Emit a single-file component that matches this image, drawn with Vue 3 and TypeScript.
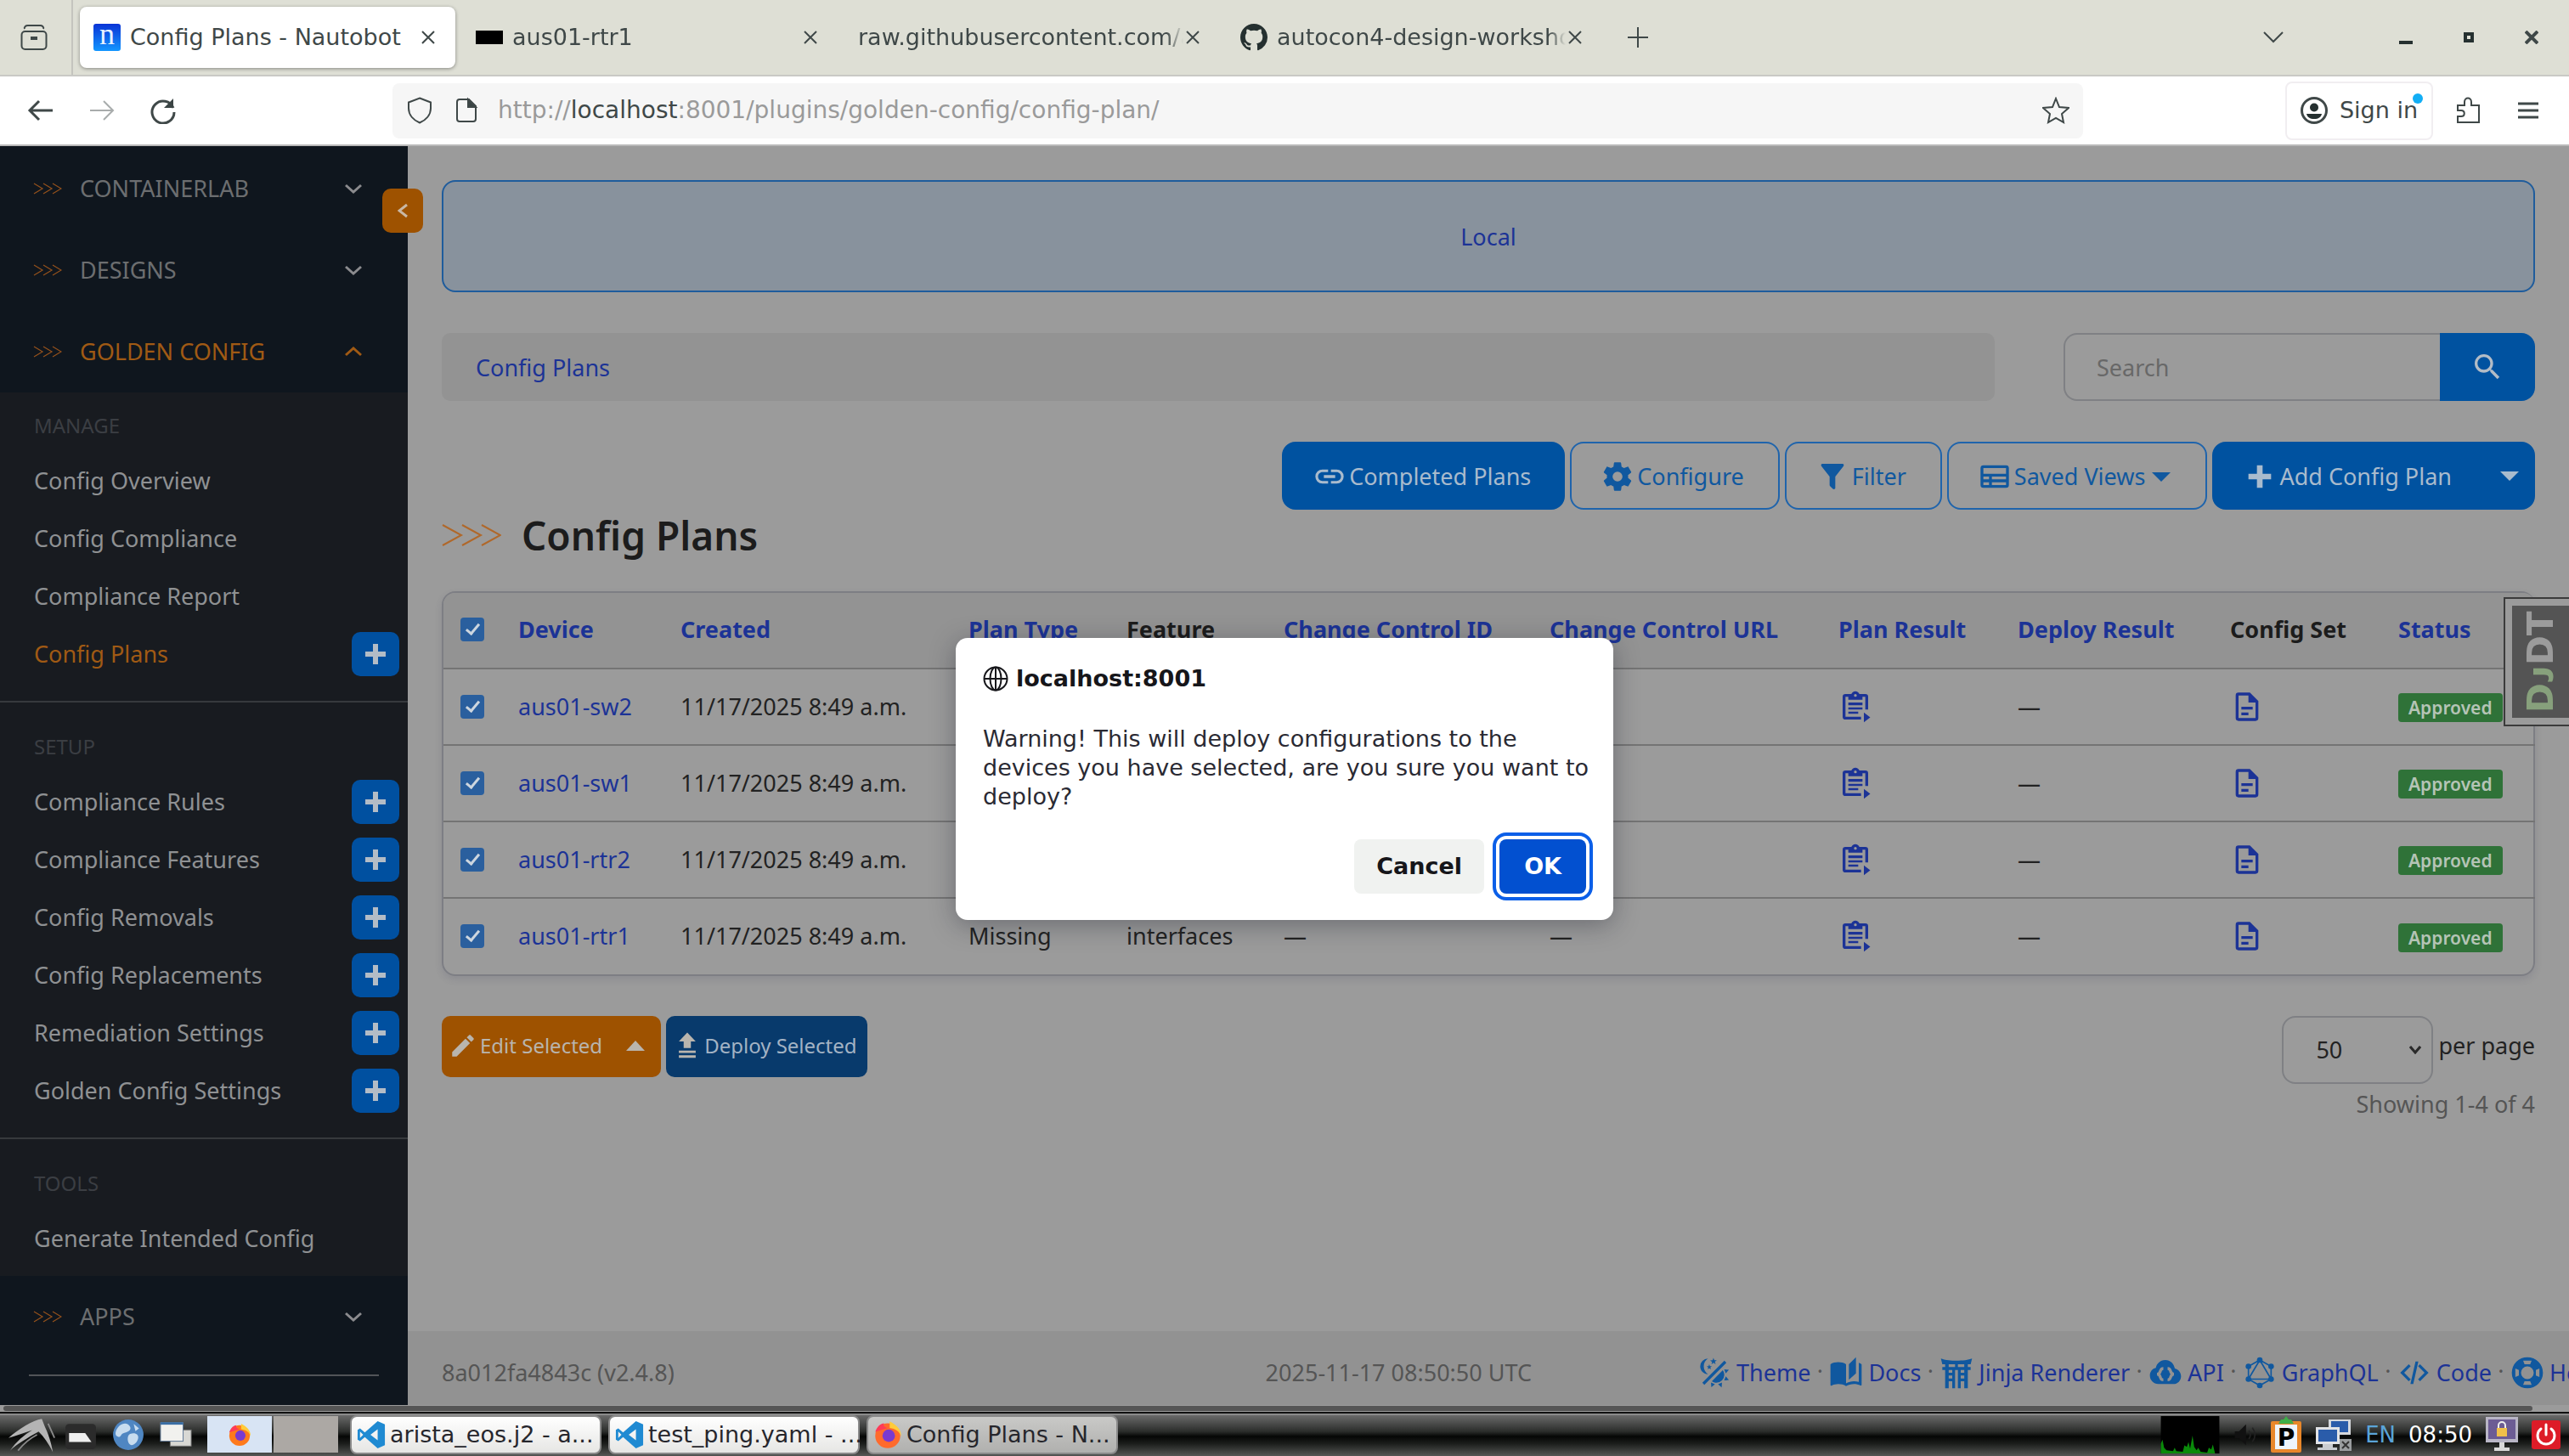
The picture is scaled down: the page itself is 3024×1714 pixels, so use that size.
<script setup lang="ts">
import { ref } from 'vue'

interface Column { label: string; width: number; link: boolean }
interface Plan { device: string; created: string; type?: string; feature?: string; control?: string }
interface MenuItem { label: string; add: boolean; active?: boolean }
interface MenuSection { title: string; items: MenuItem[] }

const icons: Record<string, string> = {
  plus: 'M20 14H14V20H10V14H4V10H10V4H14V10H20V14Z',
  link: 'M3.9,12C3.9,10.29 5.29,8.9 7,8.9H11V7H7A5,5 0 0,0 2,12A5,5 0 0,0 7,17H11V15.1H7C5.29,15.1 3.9,13.71 3.9,12M8,13H16V11H8V13M17,7H13V8.9H17C18.71,8.9 20.1,10.29 20.1,12C20.1,13.71 18.71,15.1 17,15.1H13V17H17A5,5 0 0,0 22,12A5,5 0 0,0 17,7Z',
  cog: 'M12,15.5A3.5,3.5 0 0,1 8.5,12A3.5,3.5 0 0,1 12,8.5A3.5,3.5 0 0,1 15.5,12A3.5,3.5 0 0,1 12,15.5M19.43,12.97C19.47,12.65 19.5,12.33 19.5,12C19.5,11.67 19.47,11.34 19.43,11L21.54,9.37C21.73,9.22 21.78,8.95 21.66,8.73L19.66,5.27C19.54,5.05 19.27,4.96 19.05,5.05L16.56,6.05C16.04,5.66 15.5,5.32 14.87,5.07L14.5,2.42C14.46,2.18 14.25,2 14,2H10C9.75,2 9.54,2.18 9.5,2.42L9.13,5.07C8.5,5.32 7.96,5.66 7.44,6.05L4.95,5.05C4.73,4.96 4.46,5.05 4.34,5.27L2.34,8.73C2.21,8.95 2.27,9.22 2.46,9.37L4.57,11C4.53,11.34 4.5,11.67 4.5,12C4.5,12.33 4.53,12.65 4.57,12.97L2.46,14.63C2.27,14.78 2.21,15.05 2.34,15.27L4.34,18.73C4.46,18.95 4.73,19.03 4.95,18.95L7.44,17.94C7.96,18.34 8.5,18.68 9.13,18.93L9.5,21.58C9.54,21.82 9.75,22 10,22H14C14.25,22 14.46,21.82 14.5,21.58L14.87,18.93C15.5,18.67 16.04,18.34 16.56,17.94L19.05,18.95C19.27,19.03 19.54,18.95 19.66,18.73L21.66,15.27C21.78,15.05 21.73,14.78 21.54,14.63L19.43,12.97Z',
  filter: 'M14,12V19.88C14.04,20.18 13.94,20.5 13.71,20.71C13.32,21.1 12.69,21.1 12.3,20.71L10.29,18.7C10.06,18.47 9.96,18.16 10,17.87V12H9.97L4.21,4.62C3.87,4.19 3.95,3.56 4.38,3.22C4.57,3.08 4.78,3 5,3H19C19.22,3 19.43,3.08 19.62,3.22C20.05,3.56 20.13,4.19 19.79,4.62L14.03,12H14Z',
  views: 'M4,4H20A2,2 0 0,1 22,6V18A2,2 0 0,1 20,20H4A2,2 0 0,1 2,18V6A2,2 0 0,1 4,4M4,6V10H20V6H4M4,12V14H8V12H4M10,12V14H20V12H10M4,16V18H8V16H4M10,16V18H20V16H10Z',
  down: 'M1,7H23L12,18Z',
  up: 'M1,18H23L12,6Z',
  search: 'M9.5,3A6.5,6.5 0 0,1 16,9.5C16,11.11 15.41,12.59 14.44,13.73L14.71,14H15.5L20.5,19L19,20.5L14,15.5V14.71L13.73,14.44C12.59,15.41 11.11,16 9.5,16A6.5,6.5 0 0,1 3,9.5A6.5,6.5 0 0,1 9.5,3M9.5,5C7,5 5,7 5,9.5C5,12 7,14 9.5,14C12,14 14,12 14,9.5C14,7 12,5 9.5,5Z',
  pencil: 'M20.71,7.04C21.1,6.65 21.1,6 20.71,5.63L18.37,3.29C18,2.9 17.35,2.9 16.96,3.29L15.12,5.12L18.87,8.87M3,17.25V21H6.75L17.81,9.93L14.06,6.18L3,17.25Z',
  upload: 'M12,1L19,8.5H15V14H9V8.5H5L12,1M5,16H19V18H5V16M5,20H19V22H5V20Z',
  file: 'M6,2A2,2 0 0,0 4,4V20A2,2 0 0,0 6,22H18A2,2 0 0,0 20,20V8L14,2H6M6,4H13V9H18V20H6V4M8,12V14H16V12H8M8,16V18H13V16H8Z',
  clipboard: 'M19,3H14.82C14.4,1.84 13.3,1 12,1C10.7,1 9.6,1.84 9.18,3H5A2,2 0 0,0 3,5V19A2,2 0 0,0 5,21H16V19H5V5H7V7H17V5H19V14H21V5A2,2 0 0,0 19,3M12,3A1,1 0 0,1 13,4A1,1 0 0,1 12,5A1,1 0 0,1 11,4A1,1 0 0,1 12,3M7,9H17V11H7V9M7,12.5H17V14H7V12.5M7,15.5H14V17H7V15.5M18,16L22.5,19.5L18,23V16Z',
  theme: 'M7.5,2C5.71,3.15 4.5,5.18 4.5,7.5C4.5,9.82 5.71,11.85 7.53,13C4.46,13 2,10.54 2,7.5A5.5,5.5 0 0,1 7.5,2M19.07,3.5L20.5,4.93L4.93,20.5L3.5,19.07L19.07,3.5M12.89,5.93L11.41,5L9.97,6L10.39,4.3L9,3.24L10.75,3.12L11.33,1.47L12,3.1L13.73,3.13L12.38,4.26L12.89,5.93M9.59,9.54L8.43,8.81L7.31,9.59L7.65,8.27L6.56,7.44L7.92,7.35L8.37,6.06L8.88,7.33L10.24,7.36L9.19,8.23L9.59,9.54M19,13.5A5.5,5.5 0 0,1 13.5,19C12.28,19 11.15,18.6 10.24,17.93L17.93,10.24C18.6,11.15 19,12.28 19,13.5M14.6,20.08L17.37,18.93L17.13,22.28L14.6,20.08M18.93,17.38L20.08,14.61L22.28,17.15L18.93,17.38M20.08,12.42L18.94,9.64L22.28,9.88L20.08,12.42M9.63,18.93L12.4,20.08L9.87,22.27L9.63,18.93Z',
  docs: 'M19,1L14,6V17L19,12.5V1M21,5V18.5C19.9,18.15 18.7,18 17.5,18C15.8,18 13.35,18.65 12,19.5V6C10.55,4.9 8.45,4.5 6.5,4.5C4.55,4.5 2.45,4.9 1,6V20.65C1,20.9 1.25,21.15 1.5,21.15C1.6,21.15 1.65,21.1 1.75,21.1C3.1,20.45 5.05,20 6.5,20C8.45,20 10.55,20.4 12,21.5C13.35,20.65 15.8,20 17.5,20C19.15,20 20.85,20.3 22.25,21.05C22.35,21.1 22.4,21.1 22.5,21.1C22.75,21.1 23,20.85 23,20.6V6C22.4,5.55 21.75,5.25 21,5Z',
  jinja: 'M1,2C6,4 18,4 23,2L22,6H20V8H22V10H20V23H17.5V18H15V23H13V10H11V23H9V18H6.5V23H4V10H2V8H4V6H2L1,2M6.5,6V8H11V6H6.5M13,6V8H17.5V6H13M6.5,10V12H9V10H6.5M6.5,14V16H9V14H6.5M15,10V12H17.5V10H15M15,14V16H17.5V14H15Z',
  api: 'M12,3C8.5,3 5.7,5.4 5.2,8.6C2.8,9.1 1,11.3 1,14C1,17.3 3.6,20 7,20H17.5C20.6,20 23,17.5 23,14.5C23,11.7 21.1,9.5 18.6,9C18,5.600 15.300,3 12,3M10.500,8V10C9,10 9.500,12.500 8.300,13C9.500,13.500 9,16 10.500,16V18C7,18 8,14.200 6,14V12C8,11.800 7,8 10.500,8M13.500,8C17,8 16,11.800 18,12V14C16,14.200 17,18 13.500,18V16C15,16 14.500,13.500 15.700,13C14.500,12.500 15,10 13.500,10Z',
  code: 'M14.6,16.6L19.2,12L14.6,7.4L16,6L22,12L16,18L14.6,16.6M9.4,16.6L4.8,12L9.4,7.4L8,6L2,12L8,18L9.4,16.6M12.8,4H14.8L11.2,20H9.2L12.800,4Z',
  help: 'M12,1A11,11 0 1,0 12,23A11,11 0 1,0 12,1M12,7.500A4.500,4.500 0 1,1 12,16.500A4.500,4.500 0 1,1 12,7.500M9,3.500H15L14,6H10L9,3.500M9,20.500L10,18H14L15,20.500H9M3.500,9L6,10V14L3.500,15V9M20.500,9V15L18,14V10L20.500,9Z',
}

const github = 'M8 0C3.58 0 0 3.58 0 8c0 3.54 2.29 6.53 5.47 7.59.4.07.55-.17.55-.38 0-.19-.01-.82-.01-1.49-2.01.37-2.53-.49-2.69-.94-.09-.23-.48-.94-.82-1.13-.28-.15-.68-.52-.01-.53.63-.01 1.08.58 1.23.82.72 1.21 1.87.87 2.33.66.07-.52.28-.87.51-1.07-1.78-.2-3.64-.89-3.64-3.95 0-.87.31-1.59.82-2.15-.08-.2-.36-1.02.08-2.12 0 0 .67-.21 2.2.82.64-.18 1.32-.27 2-.27s1.36.09 2 .27c1.53-1.04 2.2-.82 2.2-.82.44 1.1.16 1.92.08 2.12.51.56.82 1.27.82 2.15 0 3.07-1.87 3.75-3.65 3.95.29.25.54.73.54 1.48 0 1.07-.01 1.93-.01 2.2 0 .21.15.46.55.38A8.01 8.01 0 0 0 16 8c0-4.42-3.58-8-8-8'

const tabs = [
  { title: 'Config Plans - Nautobot', icon: 'nautobot', active: true },
  { title: 'aus01-rtr1', icon: 'terminal', active: false },
  { title: 'raw.githubusercontent.com/a', icon: '', active: false },
  { title: 'autocon4-design-worksho', icon: 'github', active: false },
]

const groups = ['CONTAINERLAB', 'DESIGNS']

const sections: MenuSection[] = [
  {
    title: 'MANAGE',
    items: [
      { label: 'Config Overview', add: false },
      { label: 'Config Compliance', add: false },
      { label: 'Compliance Report', add: false },
      { label: 'Config Plans', add: true, active: true },
    ],
  },
  {
    title: 'SETUP',
    items: [
      { label: 'Compliance Rules', add: true },
      { label: 'Compliance Features', add: true },
      { label: 'Config Removals', add: true },
      { label: 'Config Replacements', add: true },
      { label: 'Remediation Settings', add: true },
      { label: 'Golden Config Settings', add: true },
    ],
  },
  { title: 'TOOLS', items: [{ label: 'Generate Intended Config', add: false }] },
]

const columns: Column[] = [
  { label: 'Device', width: 191, link: true },
  { label: 'Created', width: 339, link: true },
  { label: 'Plan Type', width: 186, link: true },
  { label: 'Feature', width: 185, link: false },
  { label: 'Change Control ID', width: 313, link: true },
  { label: 'Change Control URL', width: 340, link: true },
  { label: 'Plan Result', width: 211, link: true },
  { label: 'Deploy Result', width: 250, link: true },
  { label: 'Config Set', width: 198, link: false },
  { label: 'Status', width: 181, link: true },
]

const created = '11/17/2025 8:49 a.m.'
const plans: Plan[] = [
  { device: 'aus01-sw2', created },
  { device: 'aus01-sw1', created },
  { device: 'aus01-rtr2', created },
  { device: 'aus01-rtr1', created, type: 'Missing', feature: 'interfaces', control: '—' },
]

const footerLinks = [
  { label: 'Theme', icon: 'theme' },
  { label: 'Docs', icon: 'docs' },
  { label: 'Jinja Renderer', icon: 'jinja' },
  { label: 'API', icon: 'api' },
  { label: 'GraphQL', icon: 'graphql' },
  { label: 'Code', icon: 'code' },
  { label: 'Help', icon: 'help' },
]

const allSelected = ref(true)
const selected = ref<string[]>(plans.map((p) => p.device))
const perPage = ref('50')
const query = ref('')
</script>

<template>
  <div class="desktop">
    <header class="tabbar">
      <button class="view" aria-label="Firefox View">
        <svg class="i32 line" viewBox="0 0 32 32"><path d="M5 6a4 3 0 0 1 4-4h14a4 3 0 0 1 4 4" /><rect x="1.500" y="9" width="29" height="21" rx="4" /><path d="M12 17h8" stroke-width="4" /></svg>
      </button>
      <div v-for="tab in tabs" :key="tab.title" class="tab" :class="{ active: tab.active }">
        <span v-if="tab.icon === 'nautobot'" class="favicon">n</span>
        <span v-else-if="tab.icon === 'terminal'" class="term"></span>
        <svg v-else-if="tab.icon === 'github'" class="i32 dark" viewBox="0 0 16 16"><path :d="github" /></svg>
        <span class="tab-title">{{ tab.title }}</span>
        <button class="close" aria-label="Close tab">
          <svg class="i16 line" viewBox="0 0 16 16"><path d="M1 1l14 14M15 1L1 15" /></svg>
        </button>
      </div>
      <button class="newtab" aria-label="New tab"><svg class="i24 line" viewBox="0 0 24 24"><path d="M12 0v24M0 12h24" /></svg></button>
      <div class="winctl">
        <button aria-label="List tabs" class="listall"><svg class="i24 line" viewBox="0 0 24 24"><path d="M1 6l11 11L23 6" /></svg></button>
        <button aria-label="Minimize"><svg class="i16 dark" viewBox="0 0 16 16"><path d="M0 12h16v4H0z" /></svg></button>
        <button aria-label="Maximize"><svg class="i16 dark" viewBox="0 0 16 16"><path fill-rule="evenodd" d="M2 2h12v12H2zM6 6v4h4V6z" /></svg></button>
        <button aria-label="Close"><svg class="i16 line" viewBox="0 0 16 16"><path d="M1 1l14 14M15 1L1 15" stroke-width="4" /></svg></button>
      </div>
    </header>

    <div class="toolbar">
      <div class="nav">
        <button aria-label="Back"><svg class="i32 line" viewBox="0 0 32 32"><path d="M30 16H3M14 5L3 16l11 11" stroke-width="3" /></svg></button>
        <button aria-label="Forward" class="faint"><svg class="i32 line" viewBox="0 0 32 32"><path d="M2 16h27M18 5l11 11-11 11" /></svg></button>
        <button aria-label="Reload"><svg class="i32 line" viewBox="0 0 32 32"><path d="M28 13A13 13 0 1 0 29 18" stroke-width="3" /><path d="M28 2v11H17z" fill="#3a4444" stroke="none" /></svg></button>
      </div>
      <div class="urlbar">
        <svg class="i32 line" viewBox="0 0 32 32"><path d="M16 1.500l13 5v7c0 8-6 14-13 17-7-3-13-9-13-17v-7z" /></svg>
        <svg class="i32 line" viewBox="0 0 32 32"><path d="M7 3h11l8 8v15a3 3 0 0 1-3 3H7a3 3 0 0 1-3-3V6a3 3 0 0 1 3-3z" /><path d="M17 3l9 9h-9z" fill="#3a4444" /></svg>
        <span class="url">http://<b>localhost</b>:8001/plugins/golden-config/config-plan/</span>
        <svg class="i32 line" viewBox="0 0 32 32"><path d="M16 2l4 10 11 1-8 7 2 10-9-5-9 5 2-10-8-7 11-1z" /></svg>
      </div>
      <div class="actions">
        <button class="signin">
          <svg class="i32 line" viewBox="0 0 32 32"><circle cx="16" cy="16" r="14.500" stroke-width="3" /><circle cx="16" cy="12.500" r="5" fill="#253030" stroke="none" /><path d="M7 20h18c-1 4-4 6-9 6s-8-2-9-6z" fill="#253030" stroke="none" /></svg>
          Sign in<i class="dot"></i>
        </button>
        <button aria-label="Extensions"><svg class="i32 line" viewBox="0 0 32 32"><path d="M3 10h8V6c0-6 8-6 8 0v4h9v20H3v-7h4c5 0 5-7 0-7H3z" /></svg></button>
        <button aria-label="Menu"><svg class="i24 line" viewBox="0 0 24 24"><path d="M0 4h24M0 12h24M0 20h24" stroke-width="3" /></svg></button>
      </div>
    </div>

    <div class="viewport">
      <nav class="sidebar">
        <button v-for="g in groups" :key="g" class="group">
          <svg class="arrows" viewBox="0 0 34 14"><path d="M1 1l10 6-10 6M12 1l10 6-10 6M23 1l10 6-10 6" /></svg>
          <span>{{ g }}</span>
          <svg class="chev" viewBox="0 0 20 12"><path d="M1 2l9 8 9-8" /></svg>
        </button>
        <button class="group open">
          <svg class="arrows" viewBox="0 0 34 14"><path d="M1 1l10 6-10 6M12 1l10 6-10 6M23 1l10 6-10 6" /></svg>
          <span>GOLDEN CONFIG</span>
          <svg class="chev" viewBox="0 0 20 12"><path d="M1 10l9-8 9 8" /></svg>
        </button>
        <div class="panel">
          <section v-for="s in sections" :key="s.title">
            <h3>{{ s.title }}</h3>
            <div v-for="item in s.items" :key="item.label" class="item">
              <a href="#" :class="{ current: item.active }">{{ item.label }}</a>
              <button v-if="item.add" :aria-label="'Add ' + item.label"><svg viewBox="0 0 24 24"><path :d="icons.plus" /></svg></button>
            </div>
          </section>
        </div>
        <button class="group">
          <svg class="arrows" viewBox="0 0 34 14"><path d="M1 1l10 6-10 6M12 1l10 6-10 6M23 1l10 6-10 6" /></svg>
          <span>APPS</span>
          <svg class="chev" viewBox="0 0 20 12"><path d="M1 2l9 8 9-8" /></svg>
        </button>
        <hr />
        <button class="collapse" aria-label="Collapse sidebar"><svg viewBox="0 0 12 18"><path d="M11 2L2 9l9 7" /></svg></button>
      </nav>

      <div class="page">
        <main>
          <div class="banner">Local</div>
          <div class="crumbs-row">
            <div class="crumbs"><a href="#">Config Plans</a></div>
            <form class="search" @submit.prevent>
              <input v-model="query" type="text" placeholder="Search" aria-label="Search" />
              <button aria-label="Search"><svg class="mdi" viewBox="0 0 24 24"><path :d="icons.search" /></svg></button>
            </form>
          </div>
          <div class="buttons">
            <button class="btn solid"><svg class="mdi" viewBox="0 0 24 24"><path :d="icons.link" /></svg>Completed Plans</button>
            <button class="btn"><svg class="mdi" viewBox="0 0 24 24"><path :d="icons.cog" /></svg>Configure</button>
            <button class="btn"><svg class="mdi" viewBox="0 0 24 24"><path :d="icons.filter" /></svg>Filter</button>
            <button class="btn"><svg class="mdi" viewBox="0 0 24 24"><path :d="icons.views" /></svg>Saved Views<svg class="caret" viewBox="0 0 24 24"><path :d="icons.down" /></svg></button>
            <div class="split">
              <button class="btn solid"><svg class="mdi" viewBox="0 0 24 24"><path :d="icons.plus" /></svg>Add Config Plan</button>
              <button class="btn solid more" aria-label="More"><svg class="caret" viewBox="0 0 24 24"><path :d="icons.down" /></svg></button>
            </div>
          </div>
          <h1>
            <svg viewBox="0 0 70 28"><path d="M1 2l22 12L1 26M24 2l22 12-22 12M47 2l22 12-22 12" /></svg>
            Config Plans
          </h1>

          <div class="table-card">
            <table>
              <colgroup>
                <col class="check-col" />
                <col v-for="c in columns" :key="c.label" :style="{ width: c.width + 'px' }" />
              </colgroup>
              <thead>
                <tr>
                  <th><input v-model="allSelected" type="checkbox" aria-label="Select all" /></th>
                  <th v-for="c in columns" :key="c.label"><a v-if="c.link" href="#">{{ c.label }}</a><template v-else>{{ c.label }}</template></th>
                </tr>
              </thead>
              <tbody>
                <tr v-for="p in plans" :key="p.device">
                  <td><input v-model="selected" type="checkbox" :value="p.device" :aria-label="'Select ' + p.device" /></td>
                  <td><a href="#">{{ p.device }}</a></td>
                  <td>{{ p.created }}</td>
                  <td>{{ p.type }}</td>
                  <td>{{ p.feature }}</td>
                  <td>{{ p.control }}</td>
                  <td>{{ p.control }}</td>
                  <td><a href="#" aria-label="Plan result"><svg class="cell-icon" viewBox="0 0 24 24"><path :d="icons.clipboard" /></svg></a></td>
                  <td>—</td>
                  <td><a href="#" aria-label="Config set"><svg class="cell-icon" viewBox="0 0 24 24"><path :d="icons.file" /></svg></a></td>
                  <td><span class="badge">Approved</span></td>
                </tr>
              </tbody>
            </table>
            <div class="djdt"><span><em>Dᴊ</em>DT</span></div>
          </div>

          <div class="below">
            <div class="bulk">
              <button class="edit"><svg viewBox="0 0 24 24"><path :d="icons.pencil" /></svg>Edit Selected<svg class="caret" viewBox="0 0 24 24"><path :d="icons.up" /></svg></button>
              <button class="deploy"><svg viewBox="0 0 24 24"><path :d="icons.upload" /></svg>Deploy Selected</button>
            </div>
            <div class="paging">
              <label><span class="select"><select v-model="perPage"><option>50</option><option>100</option></select><svg viewBox="0 0 14 10"><path d="M1 1l6 7 6-7" /></svg></span><span class="unit">per page</span></label>
              <p>Showing 1-4 of 4</p>
            </div>
          </div>
        </main>
        <footer>
          <span>8a012fa4843c (v2.4.8)</span>
          <span class="stamp">2025-11-17 08:50:50 UTC</span>
          <ul>
            <li v-for="l in footerLinks" :key="l.label">
              <a href="#">
                <svg v-if="l.icon === 'graphql'" class="gql" viewBox="0 0 24 24"><path d="M12 3l8 4.500v9L12 21l-8-4.500v-9zM12 3l8 13.500H4z" /><circle cx="12" cy="3" r="2" /><circle cx="12" cy="21" r="2" /><circle cx="4" cy="7.500" r="2" /><circle cx="20" cy="7.500" r="2" /><circle cx="4" cy="16.500" r="2" /><circle cx="20" cy="16.500" r="2" /></svg>
                <svg v-else viewBox="0 0 24 24"><path :d="icons[l.icon]" fill-rule="evenodd" /></svg>
                {{ l.label }}
              </a>
            </li>
          </ul>
        </footer>
      </div>

      <div class="hscroll"></div>

      <div class="overlay">
        <div class="dialog" role="alertdialog" aria-labelledby="dlg-title">
          <h2 id="dlg-title">
            <svg viewBox="0 0 30 30"><circle cx="15" cy="15" r="13.500" /><ellipse cx="15" cy="15" rx="6.500" ry="13.500" /><path d="M1.500 15h27M15 1.500v27" /></svg>
            localhost:8001
          </h2>
          <p>Warning! This will deploy configurations to the devices you have selected, are you sure you want to deploy?</p>
          <div class="dialog-actions">
            <button>Cancel</button>
            <button class="ok">OK</button>
          </div>
        </div>
      </div>
    </div>

    <div class="taskbar">
      <button class="bird" aria-label="Menu">
        <svg viewBox="0 0 60 44"><path d="M0 26C14 14 30 4 42 2l4 10c4 8 8 20 10 32C50 32 44 24 38 18 24 26 10 34 2 42 10 30 20 22 30 16 18 20 8 24 0 26z" fill="#b4b4b4" /><path d="M12 42c8-10 16-16 24-20M50 8l8 18" stroke="#8a8a8a" stroke-width="2" fill="none" /></svg>
      </button>
      <button class="launch" aria-label="Files"><svg viewBox="0 0 36 36"><rect x="1" y="6" width="34" height="28" rx="4" fill="#2b2b2b" /><path d="M5 16h18l7 10H5z" fill="#eee" /></svg></button>
      <button class="launch" aria-label="Web"><svg viewBox="0 0 36 36"><circle cx="18" cy="18" r="17" fill="#4f86c2" /><path d="M8 8c5-4 10-3 12 1s-3 6-7 7-3 6-7 4-2-8 2-12zM20 17c5-2 10 0 9 5s-6 9-9 7-4-10 0-12zM24 6l6 5-4 3z" fill="#c7dcef" /></svg></button>
      <button class="launch" aria-label="Desktop"><svg viewBox="0 0 40 36"><rect x="13" y="12" width="26" height="20" fill="#d8d8d4" stroke="#777" /><rect x="1" y="3" width="28" height="23" fill="#f1f1ee" stroke="#5d7694" /><path d="M1 4h28" stroke="#3a6ea5" stroke-width="3" /></svg></button>
      <button class="desk on" aria-label="Desktop 1"><svg viewBox="0 0 30 30"><circle cx="15" cy="16" r="13" fill="#ff7a1c" /><path d="M17 1c8 4 12 9 12 16-2-6-6-8-12-9z" fill="#ffcb3a" /><path d="M2 12C4 6 8 3 11 3c-1 3 1 4 4 5z" fill="#ff3b57" /><circle cx="16" cy="16" r="6.500" fill="#7a3ad0" /></svg></button>
      <button class="desk" aria-label="Desktop 2"></button>
      <div class="windows">
        <button><svg viewBox="0 0 36 36"><path d="M26 1l9 4v26l-9 4L10 21l-6 5-3-2V12l3-2 6 5zM26 11l-9 7 9 7zM4 14v8l4-4z" fill="#1f8ad2" fill-rule="evenodd" /></svg>arista_eos.j2 - a...</button>
        <button><svg viewBox="0 0 36 36"><path d="M26 1l9 4v26l-9 4L10 21l-6 5-3-2V12l3-2 6 5zM26 11l-9 7 9 7zM4 14v8l4-4z" fill="#1f8ad2" fill-rule="evenodd" /></svg>test_ping.yaml - ...</button>
        <button class="focused"><svg viewBox="0 0 30 30"><circle cx="15" cy="16" r="13" fill="#ff6a2c" /><path d="M17 1c8 4 12 9 12 16-2-6-6-8-12-9z" fill="#ffcb3a" /><path d="M2 12C4 6 8 3 11 3c-1 3 1 4 4 5z" fill="#ff3b57" /><circle cx="16" cy="16" r="6.500" fill="#7a3ad0" /></svg>Config Plans - N...</button>
      </div>
      <div class="tray">
        <svg class="cpu" viewBox="0 0 72 46"><rect width="72" height="46" fill="#000" /><path d="M0 46V34l2-5 2 10 3 3 8 1 2-4 2 4 8 1 2-8 3 2 2-6 2 8 3-16 2 14 3 4 2-3 3 5 8 1 2-6 3 2 2-6 3 12v3z" fill="#0a8a0a" /></svg>
        <svg class="vol" viewBox="0 0 34 36"><path d="M2 13h6l10-10v30L8 23H2z" fill="#111" /><path d="M22 12c3 4 3 8 0 12M27 8c5 6 5 14 0 20" stroke="#222" stroke-width="2" fill="none" /></svg>
        <svg class="clip" viewBox="0 0 38 44"><rect x="1" y="6" width="36" height="37" rx="2" fill="#e8872a" /><rect x="6" y="10" width="26" height="29" fill="#eef3fa" /><path d="M10 9h18l-3-5H22L19 0l-3 4h-3z" fill="#3fae49" /><text x="19" y="35" text-anchor="middle" font-size="28" font-weight="700" font-family="DejaVu Sans, sans-serif">P</text></svg>
        <svg class="net" viewBox="0 0 44 40"><rect x="16" y="2" width="26" height="18" fill="#d5d8dc" /><rect x="19" y="4" width="20" height="13" fill="#2a5caa" /><rect x="1" y="11" width="28" height="20" fill="#e1e3e6" /><rect x="4" y="14" width="22" height="14" fill="#2a5caa" /><path d="M9 31h12v4h5v3H3v-3h6z" fill="#c9ccd0" /><rect x="29" y="25" width="14" height="14" fill="#9a9d9f" /><path d="M32 28l8 8M40 28l-8 8" stroke="#333" stroke-width="2" /></svg>
        <span class="lang">EN</span>
        <time>08:50</time>
        <svg class="lock" viewBox="0 0 40 44"><rect x="1" y="1" width="38" height="30" fill="#b9b6c6" /><rect x="4" y="4" width="32" height="23" fill="#6c5c94" /><rect x="14" y="14" width="12" height="10" fill="#f0c04a" /><path d="M16 14v-3a4 4 0 0 1 8 0v3" stroke="#eee" stroke-width="2" fill="none" /><path d="M17 31h6v6h6v4H11v-4h6z" fill="#d9d9d9" /></svg>
        <svg class="power" viewBox="0 0 34 34"><rect width="34" height="34" rx="3" fill="#dd1c28" /><path d="M11 10a10 10 0 1 0 12 0M17 5v12" stroke="#fff" stroke-width="3" fill="none" stroke-linecap="round" /></svg>
      </div>
    </div>
  </div>
</template>

<style>
html, body { margin: 0; background: #000; }
</style>

<style scoped>
* { box-sizing: border-box; }
button { border: 0; background: none; padding: 0; margin: 0; font: inherit; color: inherit; cursor: pointer; display: flex; align-items: center; }
a { text-decoration: none; color: #1c3396; }
svg { display: block; flex: none; }
h1, h2, h3, p, ul { margin: 0; padding: 0; }

.desktop { min-height: 100vh; display: flex; flex-direction: column; overflow: hidden; font-family: "Noto Sans", sans-serif; font-size: 27px; line-height: 36px; color: #222; }
.i32 { width: 32px; height: 32px; }
.i24 { width: 24px; height: 24px; }
.i16 { width: 16px; height: 16px; }
.line { fill: none; stroke: #3f4848; stroke-width: 2; }
.dark { fill: #253030; }

/* browser chrome */
.tabbar { height: 90px; display: flex; align-items: center; background: #dedfd5; border-bottom: 2px solid #c9c9c5; font-family: "DejaVu Sans", sans-serif; color: #3f4848; }
.view { width: 86px; height: 100%; padding-left: 24px; border-right: 2px solid #c4c4be; }
.tab { width: 442px; height: 72px; margin-left: 8px; padding: 0 24px 0 16px; display: flex; align-items: center; gap: 11px; border-radius: 8px; }
.tab.active { background: #fff; box-shadow: 0 1px 4px rgba(0, 0, 0, .4); }
.tab-title { flex: 1; min-width: 0; margin-right: -8px; overflow: hidden; white-space: nowrap; mask-image: linear-gradient(to left, transparent, #000 20px); }
.tab.active .tab-title { mask-image: none; overflow: visible; }
.favicon { width: 32px; height: 32px; border-radius: 3px; background: linear-gradient(#0a34d6, #1296ff); color: #e8f2ff; font: 36px/24px "Liberation Serif", serif; text-align: center; }
.term { width: 32px; height: 16px; background: #000; }
.newtab { margin-left: 30px; }
.winctl { flex: 1; display: flex; justify-content: flex-end; align-items: center; gap: 58px; padding-right: 36px; }
.listall { margin-right: 78px; }

.toolbar { height: 82px; display: flex; align-items: center; background: #fff; border-bottom: 2px solid #b9b9b9; font-family: "DejaVu Sans", sans-serif; color: #3f4848; }
.nav { width: 462px; display: flex; gap: 40px; padding-left: 32px; }
.faint { opacity: .45; }
.urlbar { flex: 1; height: 65px; display: flex; align-items: center; gap: 24px; padding: 0 16px; border-radius: 8px; background: #f6f6f6; }
.url { flex: 1; margin-left: -4px; color: #9a9a9a; font-size: 28px; white-space: nowrap; }
.url b { font-weight: 400; color: #3f4848; }
.actions { display: flex; align-items: center; gap: 26px; margin-left: 238px; padding-right: 36px; }
.actions > :last-child { margin-left: 16px; }
.signin { position: relative; height: 69px; gap: 14px; padding: 0 16px 0 16px; border: 2px solid #f1eef1; border-radius: 8px; white-space: nowrap; }
.dot { position: absolute; right: 10px; top: 12px; width: 12px; height: 12px; border-radius: 50%; background: #12aef5; }

/* page area */
.viewport { flex: 1; position: relative; display: flex; background: #9b9b9b; padding-bottom: 8px; border-bottom: 2px solid #111; }
.sidebar { position: relative; width: 480px; flex: none; padding-top: 2px; background: #0f161e; color: #6c6e70; }
.group { width: 100%; height: 96px; padding: 0 54px 0 39px; gap: 21px; }
.group span { flex: 1; text-align: left; }
.arrows { width: 34px; height: 14px; fill: none; stroke: #96521c; stroke-width: 1.2; }
.chev { width: 20px; height: 12px; fill: none; stroke: #8b8b8e; stroke-width: 3; }
.open { color: #a05a14; }
.open .chev { stroke: #a05a14; }
.panel { background: #181b20; padding-bottom: 10px; }
section { padding: 21px 0; }
section + section { border-top: 2px solid #36393d; padding-top: 34px; }
section:last-child { padding-bottom: 0; }
h3 { padding-left: 40px; margin-bottom: 13px; font-size: 24px; line-height: 36px; font-weight: 400; color: #3b3e43; }
.item { height: 68px; display: flex; align-items: center; justify-content: space-between; padding: 0 10px 0 40px; }
.item a { color: #8f9193; white-space: nowrap; }
.item .current { color: #a05a14; }
.item button { width: 56px; height: 52px; justify-content: center; border-radius: 10px; background: #0050a0; fill: #b3bcc6; }
.item button svg { width: 36px; height: 36px; }
.sidebar hr { margin: 20px 34px 0; border: 0; border-top: 2px solid #515458; }
.collapse { position: absolute; top: 50px; right: -18px; width: 48px; height: 52px; justify-content: center; border-radius: 10px; background: #9e5200; fill: none; stroke: #c9b8a5; stroke-width: 3; }
.collapse svg { width: 12px; height: 18px; }

.page { flex: 1; min-width: 0; display: flex; flex-direction: column; }
main { flex: 1; padding: 40px 40px 0; }
.banner { height: 132px; display: flex; align-items: center; justify-content: center; padding-top: 2px; border: 2px solid #1f5c9c; border-radius: 16px; background: #88929d; color: #1c3396; }
.crumbs-row { display: flex; gap: 81px; margin-top: 48px; }
.crumbs { flex: 1; height: 80px; display: flex; align-items: center; padding: 2px 40px 0; border-radius: 10px; background: #939393; }
.search { display: flex; width: 555px; height: 80px; }
.search input { flex: 1; min-width: 0; padding: 2px 37px 0; border: 2px solid #7f8084; border-right: 0; border-radius: 16px 0 0 16px; background: transparent; font: inherit; color: #222; outline: none; }
.search input::placeholder { color: #686868; opacity: 1; }
.search button { width: 112px; justify-content: center; border-radius: 0 16px 16px 0; background: #0052a0; color: #b3bcc6; }
.mdi { width: 40px; height: 40px; fill: currentColor; }
.caret { width: 24px; height: 24px; fill: currentColor; }
.buttons { display: flex; justify-content: flex-end; gap: 6px; margin-top: 48px; }
.btn { height: 80px; gap: 3px; padding: 2px 40px 0 34px; border: 2px solid #1f64ac; border-radius: 16px; color: #10589f; white-space: nowrap; }
.btn .caret { margin-left: 4px; }
.btn.solid { padding-right: 38px; background: #0052a0; border-color: #0052a0; color: #a9bbcd; }
.split { display: flex; }
.split .btn:first-child { border-radius: 16px 0 0 16px; }
.btn.more { padding: 0 16px 0 10px; border-radius: 0 16px 16px 0; }
h1 { display: flex; align-items: center; gap: 24px; font-size: 46px; line-height: 60px; font-weight: 600; color: #1c1c1c; }
h1 svg { width: 70px; height: 28px; fill: none; stroke: #b0682a; stroke-width: 2; }

.table-card { position: relative; margin-top: 36px; border: 2px solid #7d7e84; border-radius: 16px; box-shadow: 0 4px 8px rgba(60, 60, 90, .14); }
table { width: 100%; table-layout: fixed; border-collapse: collapse; }
.check-col { width: 68px; }
th, td { height: 90px; padding: 0 0 1px 20px; text-align: left; white-space: nowrap; }
th { height: 89px; padding-bottom: 3px; font-weight: 700; background: #939393; color: #1c1c1c; }
th:first-child { border-top-left-radius: 14px; }
th:last-child { border-top-right-radius: 14px; }
td { border-top: 2px solid #747474; }
table input { appearance: none; display: block; position: relative; width: 28px; height: 28px; margin: 0; border-radius: 4px; background: #2a5f9e; }
table input:checked::after { content: ""; position: absolute; left: 10px; top: 4px; width: 6px; height: 13px; border: solid #cdd6df; border-width: 0 3px 3px 0; transform: rotate(40deg); }
.cell-icon { width: 40px; height: 40px; fill: #1c3396; }
.badge { display: inline-block; height: 34px; padding: 0 12px; border-radius: 4px; background: #2f7238; color: #b5c4b6; font-size: 21px; line-height: 34px; font-weight: 600; vertical-align: middle; }
.djdt { position: absolute; right: -42px; top: 5px; width: 77px; height: 152px; padding: 8px 0 8px 8px; border: 2px solid #3b3b3b; border-right: 0; background: #9b9b9b; }
.djdt span { display: flex; width: 100%; height: 100%; align-items: center; justify-content: center; writing-mode: vertical-rl; transform: rotate(180deg); background: #545454; color: #9b9b9b; font-family: "DejaVu Sans", sans-serif; font-size: 42px; line-height: 60px; font-weight: 700; }
.djdt em { font-style: normal; color: #87a07c; }

.below { display: flex; justify-content: space-between; align-items: flex-start; margin-top: 47px; }
.bulk { display: flex; gap: 6px; font-size: 24px; color: #b9b5ae; fill: #b9b5ae; }
.bulk button { height: 72px; padding: 0 12px 2px 8px; gap: 3px; border-radius: 10px; white-space: nowrap; }
.bulk svg { width: 34px; height: 34px; }
.bulk .edit { background: #9e5200; padding-right: 18px; }
.bulk .edit .caret { width: 24px; height: 24px; margin-left: 24px; }
.bulk .deploy { background: #083a6c; color: #a3b3c4; }
.paging { text-align: right; }
.paging label { display: flex; align-items: center; gap: 6px; }
.unit { padding-bottom: 10px; }
.select { display: flex; align-items: center; width: 178px; height: 80px; padding-right: 12px; border: 2px solid #7f8084; border-radius: 16px; }
.select select { flex: 1; min-width: 0; height: 100%; padding: 0 0 0 38px; appearance: none; border: 0; background: transparent; font: inherit; color: inherit; outline: none; }
.select svg { width: 14px; height: 10px; fill: none; stroke: #2a2a2a; stroke-width: 3; }
.paging p { margin-top: 6px; color: #555; }

footer { display: flex; align-items: center; height: 87px; padding: 10px 0 0 40px; background: #929292; color: #555; white-space: nowrap; overflow: hidden; }
.stamp { margin-left: auto; }
footer span:first-child { width: 320px; }
footer ul { display: flex; list-style: none; width: 1026px; margin-left: 195px; overflow: hidden; }
footer li { display: flex; flex: none; }
footer li + li::before { content: "·"; width: 22px; text-align: center; }
footer a { display: flex; align-items: center; gap: 6px; }
footer svg { width: 40px; height: 40px; fill: #10589f; }
footer .gql path { fill: none; stroke: #10589f; stroke-width: 1; }

.hscroll { position: absolute; left: 4px; right: 43px; bottom: 1px; height: 6px; border-radius: 3px; background: #555; }
.overlay { position: absolute; inset: 0; display: flex; align-items: center; justify-content: center; }
.dialog { width: 774px; padding: 31px 24px 31px 32px; border-radius: 14px; background: #fff; box-shadow: 0 6px 30px rgba(20, 24, 36, .35); font-family: "DejaVu Sans", sans-serif; line-height: 34px; color: #2a2a33; }
.dialog h2 { display: flex; align-items: center; gap: 9px; font-size: 27px; line-height: 34px; color: #16161a; }
.dialog h2 svg { width: 30px; height: 30px; fill: none; stroke: #16161a; stroke-width: 2; }
.dialog p { margin-top: 37px; }
.dialog-actions { display: flex; justify-content: flex-end; gap: 18px; margin-top: 33px; padding-right: 8px; font-weight: 700; }
.dialog-actions button { height: 64px; padding: 0 26px; border-radius: 8px; background: #f0f2f0; color: #16161a; }
.dialog-actions .ok { padding: 0 29px; background: #0250d0; color: #fff; outline: 4px solid #0b5fe8; outline-offset: 4px; }

/* desktop panel */
.taskbar { height: 50px; display: flex; align-items: center; padding-bottom: 3px; border-top: 2px solid #8a8a8a; background: linear-gradient(#6a6a6a, #2b2d2b 40%, #050605 52%, #1c1e1c 70%, #555755); font-family: "DejaVu Sans", sans-serif; color: #fff; }
.bird { margin: 0 10px; }
.bird svg { width: 56px; height: 44px; }
.launch { margin-right: 18px; }
.launch svg { width: 38px; height: 38px; }
.desk { width: 76px; height: 43px; margin-right: 2px; justify-content: center; background: #aca8a4; }
.desk.on { background: #d8e4f4; }
.desk svg { width: 28px; height: 28px; }
.windows { display: flex; gap: 8px; margin-left: 12px; }
.windows button { width: 296px; height: 46px; padding-left: 6px; gap: 5px; border: 2px solid #8a8a8a; border-radius: 8px; background: linear-gradient(#fff, #e6e6e4); color: #26262c; white-space: nowrap; }
.windows .focused { background: linear-gradient(#c9c9c7, #b0b0ae); }
.windows svg { width: 34px; height: 34px; }
.tray { flex: 1; display: flex; justify-content: flex-end; align-items: center; gap: 15px; padding-right: 10px; font-size: 26px; }
.cpu { width: 72px; height: 44px; }
.vol { width: 28px; height: 36px; }
.clip { width: 38px; height: 44px; }
.net { width: 44px; height: 40px; }
.lang { color: #5aa4d8; }
.lock { width: 40px; height: 44px; }
.power { width: 34px; height: 34px; }
</style>
